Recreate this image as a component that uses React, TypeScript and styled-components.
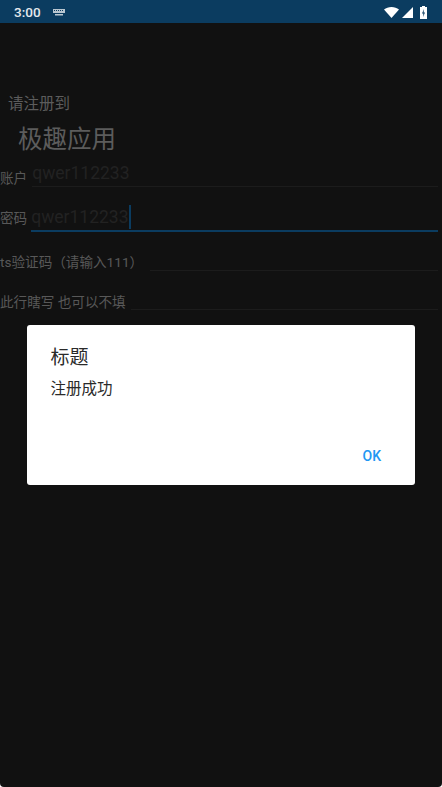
import styled, { createGlobalStyle } from "styled-components";

const CJK = `Roboto, "Noto Sans CJK SC", sans-serif`;

const GlobalStyle = createGlobalStyle`
  html, body {
    margin: 0;
    padding: 0;
    background: #ffffff;
    font-family: ${CJK};
  }
`;

const Screen = styled.div`
  position: relative;
  width: 442px;
  height: 787px;
  overflow: hidden;
  background: #111111;
  border-radius: 0 0 4px 4px;
  display: flex;
  flex-direction: column;
`;

const StatusBar = styled.div`
  height: 23px;
  flex: none;
  background: #0b3c60;
  display: flex;
  align-items: center;
  padding: 1px 15px 0 14px;
  box-sizing: border-box;
  color: #ffffff;
`;

const Clock = styled.span`
  font-size: 13.5px;
  font-weight: 500;
  color: #e4e9ed;
`;

const KeyboardIcon = styled.svg`
  margin-left: 12px;
  width: 12px;
  height: 7px;
`;

const StatusIcons = styled.div`
  margin-left: auto;
  display: flex;
  align-items: center;
  gap: 3px;
`;

const BatteryIcon = styled.svg`
  margin-left: 4px;
`;

const Form = styled.div`
  display: flex;
  flex-direction: column;
  padding-top: 70px;
`;

const Greeting = styled.div`
  font-size: 15.5px;
  line-height: 22px;
  padding-left: 8px;
  color: #5c5c5c;
`;

const AppName = styled.div`
  font-size: 24.5px;
  line-height: 34px;
  margin-top: 8px;
  padding-left: 18px;
  color: #5c5c5c;
`;

const Row = styled.div<{ $height: number }>`
  display: flex;
  align-items: flex-end;
  height: ${(p) => p.$height}px;
  padding-right: 4px;
`;

const Label = styled.span<{ $lift?: number }>`
  font-size: 13.6px;
  line-height: 20px;
  flex: none;
  color: #585858;
  margin-bottom: ${(p) => p.$lift ?? -1}px;
`;

const Field = styled.div<{ $focused?: boolean; $gap: number }>`
  flex: 1;
  margin-left: ${(p) => p.$gap}px;
  height: 28px;
  box-sizing: border-box;
  border-bottom: ${(p) => (p.$focused ? "2px solid #0b3c60" : "1px solid #1c1c1c")};
  display: flex;
  align-items: center;
  font-size: 17.5px;
  color: #222222;
`;

const Caret = styled.span`
  width: 2px;
  height: 24px;
  background: #0b3c60;
`;

const Dialog = styled.div`
  position: absolute;
  left: 27px;
  top: 325px;
  width: 388px;
  height: 160px;
  box-sizing: border-box;
  padding: 20px 24px 0 23.5px;
  border-radius: 3px;
  background: #ffffff;
  display: flex;
  flex-direction: column;
`;

const DialogTitle = styled.div`
  font-size: 19px;
  line-height: 25px;
  color: #2a2a2a;
`;

const DialogMessage = styled.div`
  font-size: 15.5px;
  line-height: 22px;
  margin-top: 8px;
  color: #2a2a2a;
`;

const OkButton = styled.button`
  position: absolute;
  right: 34px;
  bottom: 19.5px;
  padding: 0;
  border: 0;
  background: none;
  font-family: ${CJK};
  font-size: 14px;
  font-weight: 500;
  line-height: 20px;
  color: #2196f3;
`;

const App = () => (
  <>
    <GlobalStyle />
    <Screen>
      <StatusBar>
        <Clock>3:00</Clock>
        <KeyboardIcon viewBox="0 0 12 7">
          <path d="M0 0h12v4H0z M2 5h8v1.4H2z" fill="#b9c6d0" />
          <path
            d="M1 1h1v1H1zM3 1h1v1H3zM5 1h1v1H5zM7 1h1v1H7zM9 1h1v1H9z"
            fill="#0b3c60"
          />
        </KeyboardIcon>
        <StatusIcons>
          <svg width="15" height="11" viewBox="0 0 15 11">
            <path d="M0 2.6C2 .9 4.6 0 7.5 0S13 .9 15 2.6L7.5 11z" fill="#ffffff" />
          </svg>
          <svg width="11" height="11" viewBox="0 0 11 11">
            <path d="M11 0v11H0z" fill="#ffffff" />
          </svg>
          <BatteryIcon width="7" height="13" viewBox="0 0 7 13">
            <path
              fillRule="evenodd"
              d="M2 0h3v1h2v12H0V1h2zM4 3 2 7.5h1.4L3 11l2-4.5H3.6z"
              fill="#ffffff"
            />
          </BatteryIcon>
        </StatusIcons>
      </StatusBar>
      <Form>
        <Greeting>请注册到</Greeting>
        <AppName>极趣应用</AppName>
        <Row $height={30}>
          <Label>账户</Label>
          <Field $gap={5}>qwer112233</Field>
        </Row>
        <Row $height={45}>
          <Label $lift={4}>密码</Label>
          <Field $gap={4} $focused>
            qwer112233
            <Caret />
          </Field>
        </Row>
        <Row $height={39}>
          <Label>ts验证码（请输入111）</Label>
          <Field $gap={7} />
        </Row>
        <Row $height={39}>
          <Label $lift={-2}>此行瞎写 也可以不填</Label>
          <Field $gap={5} />
        </Row>
      </Form>
      <Dialog>
        <DialogTitle>标题</DialogTitle>
        <DialogMessage>注册成功</DialogMessage>
        <OkButton>OK</OkButton>
      </Dialog>
    </Screen>
  </>
);

export default App;
